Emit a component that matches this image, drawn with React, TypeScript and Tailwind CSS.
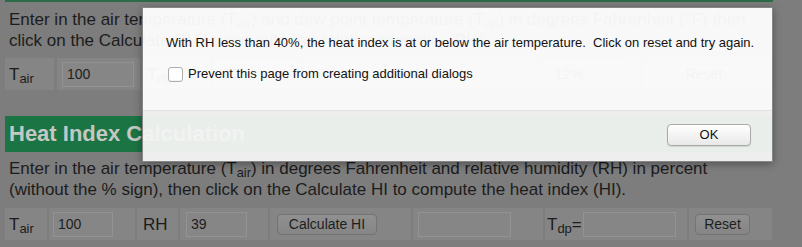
import React from "react";

const cell = "bg-[#858585] h-[32px] flex items-center shrink-0";
const input =
  "h-[25px] border border-[#939393] bg-[#868686] px-[4px] text-[14px] text-[#1e1e1e] flex items-center";
const btn =
  "h-[21px] rounded-[4px] border border-[#737373] bg-gradient-to-b from-[#909090] to-[#858585] text-[14px] text-[#1e1e1e] flex items-center justify-center";

function Label({ main, sub, tail }: { main: string; sub?: string; tail?: string }) {
  return (
    <span className="text-[17px] text-[#1c1c1c] leading-none">
      {main}
      {sub && <sub className="text-[13px]">{sub}</sub>}
      {tail}
    </span>
  );
}

function TopRow() {
  return (
    <div className="flex gap-[3px] pl-[5px] mt-[7px]">
      <div className={`${cell} w-[49px] pl-[4px]`}>
        <Label main="T" sub="air" />
      </div>
      <div className={`${cell} w-[83px] pl-[5px]`}>
        <div className={`${input} w-[72px] h-[23px]`}>100</div>
      </div>
      <div className={`${cell} w-[67px] pl-[4px]`}>
        <Label main="T" sub="dp" />
      </div>
      <div className={`${cell} w-[87px] pl-[5px]`}>
        <div className={`${input} w-[72px] h-[23px]`}>70</div>
      </div>
      <div className={`${cell} w-[237px] justify-center`}>
        <div className={`${btn} w-[104px]`}>Calculate RH</div>
      </div>
      <div className={`${cell} w-[97px] pl-[4px]`}>
        <div className={`${input} w-[75px] h-[23px] pl-[7px]`}>12%</div>
      </div>
      <div className={`${cell} w-[129px] pl-[32px]`}>
        <div className={`${btn} w-[58px]`}>Reset</div>
      </div>
    </div>
  );
}

function BottomRow() {
  return (
    <div className="flex gap-[2px] pl-[5px] mt-[8px]">
      <div className={`${cell} w-[42px] pl-[4px]`}>
        <Label main="T" sub="air" />
      </div>
      <div className={`${cell} w-[86px] pl-[4px]`}>
        <div className={`${input} w-[60px]`}>100</div>
      </div>
      <div className={`${cell} w-[41px] pl-[6px]`}>
        <Label main="RH" />
      </div>
      <div className={`${cell} w-[88px] pl-[6px]`}>
        <div className={`${input} w-[61px]`}>39</div>
      </div>
      <div className={`${cell} w-[141px] pl-[7px]`}>
        <div className={`${btn} w-[100px]`}>Calculate HI</div>
      </div>
      <div className={`${cell} w-[130px] pl-[5px]`}>
        <div className={`${input} w-[93px]`}></div>
      </div>
      <div className={`${cell} w-[142px] pl-[2px]`}>
        <Label main="T" sub="dp" tail="=" />
        <div className={`${input} w-[93px] ml-[1px]`}></div>
      </div>
      <div className={`${cell} w-[83px] pl-[6px]`}>
        <div className={`${btn} w-[55px]`}>Reset</div>
      </div>
    </div>
  );
}

function Dialog() {
  return (
    <div className="absolute left-[142px] top-[7px] w-[631px] h-[155px] border border-[#555]/70 bg-white/95 shadow-[0_2px_8px_rgba(0,0,0,0.35)] flex flex-col text-[13px] leading-[16px] text-[#111]">
      <div className="h-[102px] pl-[23px] pt-[27px]">
        <p className="whitespace-pre">
          With RH less than 40%, the heat index is at or below the air temperature.  Click on reset and try again.
        </p>
        <label className="flex items-center mt-[15px] ml-[2px] gap-[5px]">
          <span className="w-[15px] h-[15px] rounded-[3px] border border-[#adadad] bg-white shadow-[inset_0_-1px_1px_rgba(0,0,0,0.05)]" />
          <span>Prevent this page from creating additional dialogs</span>
        </label>
      </div>
      <div className="flex-1 border-t border-[#e2e2e2] bg-black/[0.04] flex justify-end items-start pt-[13px] pr-[21px]">
        <button className="w-[84px] h-[22px] rounded-[4px] border border-[#a9a9a9] bg-gradient-to-b from-white to-[#e9e9e9] shadow-[0_1px_1px_rgba(0,0,0,0.1)] text-[13px] text-[#111]">
          OK
        </button>
      </div>
    </div>
  );
}

export default function App() {
  return (
    <div className="relative w-[802px] h-[247px] overflow-hidden bg-[#7d7d7d] font-['Liberation_Sans',Arial,sans-serif]">
      <div className="ml-[5px] w-[768px] h-[2px] bg-[#2c6b47]" />
      <p className="mt-[7px] pl-[9px] text-[17px] leading-[21px] text-[#1c1c1c] whitespace-nowrap">
        Enter in the air temperature (T<sub>air</sub>) and dew point temperature (T<sub>dp</sub>) in degrees Fahrenheit (<sup>o</sup>F) then
        <br />
        click on the Calculate RH to compute the relative humidity (RH).
      </p>
      <TopRow />
      <div className="mt-[26px] ml-[5px] w-[767px] h-[36px] bg-[#1b7443] pl-[4px] text-[22px] font-bold leading-[36px] text-[#c3c8c5]">
        Heat Index Calculation
      </div>
      <p className="mt-[6px] pl-[9px] text-[17px] leading-[21px] text-[#1c1c1c] whitespace-nowrap">
        Enter in the air temperature (T<sub>air</sub>) in degrees Fahrenheit and relative humidity (RH) in percent
        <br />
        (without the % sign), then click on the Calculate HI to compute the heat index (HI).
      </p>
      <BottomRow />
      <Dialog />
    </div>
  );
}
